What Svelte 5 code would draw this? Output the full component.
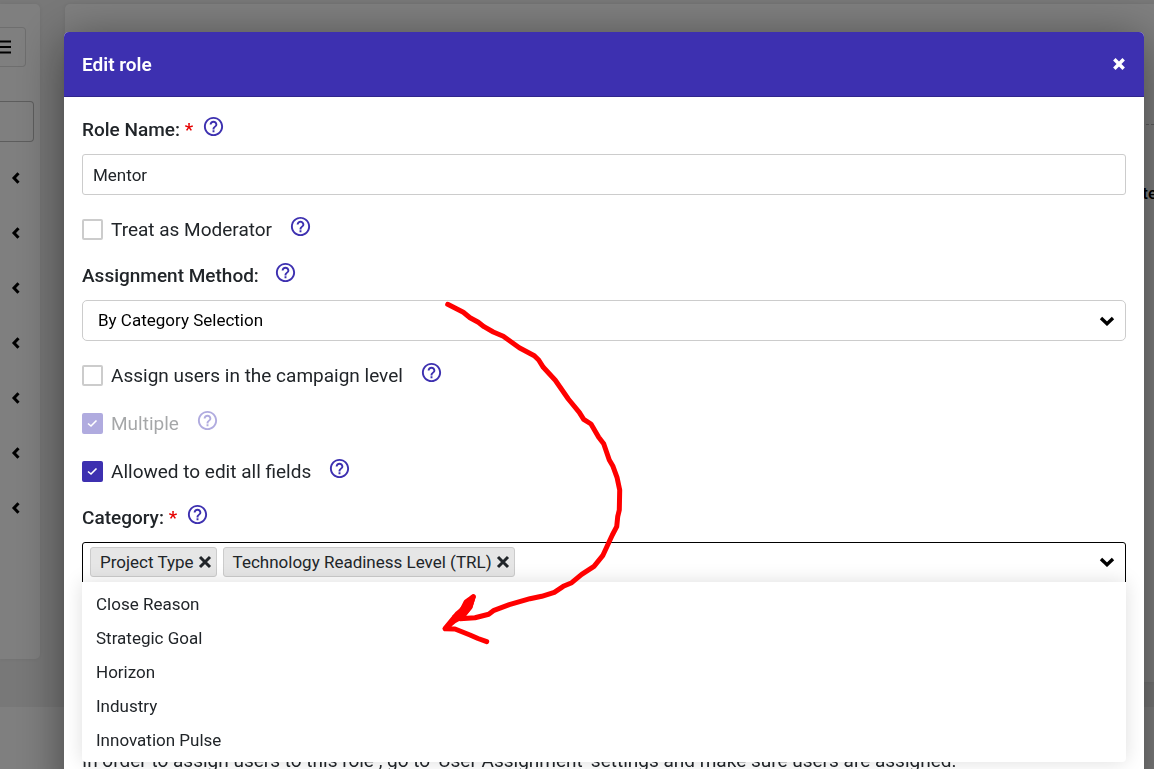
<script lang="ts">
  let roleName = $state('Mentor');
  let method = $state('By Category Selection');
  let moderator = $state(false);
  let campaign = $state(false);
  let multiple = $state(true);
  let editAll = $state(true);
  let selected = $state(['Project Type', 'Technology Readiness Level (TRL)']);
  const options = ['Close Reason', 'Strategic Goal', 'Horizon', 'Industry', 'Innovation Pulse'];
  const sections = [1, 2, 3, 4, 5, 6, 7];

  function remove(name: string) {
    selected = selected.filter((item) => item !== name);
  }
</script>

{#snippet help(topic)}
  <button class="help" type="button" aria-label={'Help: ' + topic}>
    <svg viewBox="0 0 24 24" aria-hidden="true">
      <path d="M11 18h2v-2h-2v2zm1-16C6.480 2 2 6.480 2 12s4.480 10 10 10 10-4.480 10-10S17.520 2 12 2zm0 18c-4.410 0-8-3.590-8-8s3.590-8 8-8 8 3.590 8 8-3.590 8-8 8zm0-14c-2.210 0-4 1.790-4 4h2c0-1.100.9-2 2-2s2 .9 2 2c0 2-3 1.750-3 5h2c0-2.250 3-2.500 3-5 0-2.210-1.790-4-4-4z" />
    </svg>
  </button>
{/snippet}

{#snippet tick()}
  <svg class="tick" viewBox="0 0 21 21" aria-hidden="true"><path d="M6 10.500l3 2.500 5.500-5.500" /></svg>
{/snippet}

{#snippet chevron()}
  <svg class="chevron" viewBox="0 0 16 10" aria-hidden="true"><path d="M2 2 8 7.700 14 2" /></svg>
{/snippet}

<div class="page">
  <div class="columns">
    <aside class="sidebar">
      <button class="menu-button" type="button" aria-label="Menu">
        <svg viewBox="0 0 12 14" aria-hidden="true"><path d="M0 1.500h11M0 7h11M0 12.500h11" /></svg>
      </button>
      <input class="search" type="text" aria-label="Search" />
      <nav class="sections">
        {#each sections as section}
          <button class="section" type="button" aria-label={'Section ' + section}>
            <svg viewBox="0 0 10 14" aria-hidden="true"><path d="M7.500 2.200 3 7l4.500 4.800" /></svg>
          </button>
        {/each}
      </nav>
    </aside>
    <main class="content">
      <div class="content-head"></div>
      <div class="content-row">te</div>
    </main>
  </div>
  <div class="page-foot"></div>
</div>

<div class="backdrop">
  <div class="modal" role="dialog" aria-labelledby="title">
    <header>
      <h1 id="title">Edit role</h1>
      <button class="close" type="button" aria-label="Close">
        <svg viewBox="0 0 12 12" aria-hidden="true"><path d="M2 2l8 8M10 2l-8 8" /></svg>
      </button>
    </header>

    <form>
      <div class="field">
        <div class="line title-line">
          <label for="role">Role Name: <span class="req">*</span></label>
          {@render help('Role Name')}
        </div>
        <input id="role" class="control" type="text" bind:value={roleName} />
      </div>

      <div class="line check-line">
        <span class="box"><input id="moderator" type="checkbox" bind:checked={moderator} />{@render tick()}</span>
        <label for="moderator">Treat as Moderator</label>
        {@render help('Treat as Moderator')}
      </div>

      <div class="field">
        <div class="line title-line wide">
          <label for="method">Assignment Method:</label>
          {@render help('Assignment Method')}
        </div>
        <div class="select-wrap">
          <select id="method" class="control" bind:value={method}>
            <option>By Category Selection</option>
          </select>
          {@render chevron()}
        </div>
      </div>

      <div class="checks">
        <div class="line check-line">
          <span class="box"><input id="campaign" type="checkbox" bind:checked={campaign} />{@render tick()}</span>
          <label for="campaign">Assign users in the campaign level</label>
          {@render help('Assign users')}
        </div>
        <div class="line check-line disabled">
          <span class="box"><input id="multiple" type="checkbox" bind:checked={multiple} disabled />{@render tick()}</span>
          <label for="multiple">Multiple</label>
          {@render help('Multiple')}
        </div>
        <div class="line check-line">
          <span class="box"><input id="editAll" type="checkbox" bind:checked={editAll} />{@render tick()}</span>
          <label for="editAll">Allowed to edit all fields</label>
          {@render help('Allowed to edit all fields')}
        </div>
      </div>

      <div class="field">
        <div class="line title-line">
          <label for="category">Category: <span class="req">*</span></label>
          {@render help('Category')}
        </div>
        <div class="multi">
          <div class="chips">
            {#each selected as name}
              <span class="chip">
                {name}
                <button type="button" aria-label={'Remove ' + name} onclick={() => remove(name)}>
                  <svg viewBox="0 0 14 14" aria-hidden="true"><path d="M2 2l10 10M12 2 2 12" /></svg>
                </button>
              </span>
            {/each}
            <input id="category" type="text" />
            {@render chevron()}
          </div>
          <ul class="options">
            {#each options as option}
              <li><button type="button">{option}</button></li>
            {/each}
          </ul>
        </div>
        <p class="note">In order to assign users to this role , go to 'User Assignment' settings and make sure users are assigned.</p>
      </div>
    </form>

    <svg class="arrow" viewBox="0 0 190 350" aria-hidden="true">
      <path d="M13.700 12.300 29.300 20.300 36 25.700 44.300 30.300 50 34.700 59.300 40 69.300 44.300 85.300 55.700 100.300 63.700 104.700 68 109.300 75.300 121.300 88.300 134.300 107 145.300 120.300 149.700 127.300 157 132 164.700 145.300 169.700 151.700 175.300 168 178.700 173.700 183 185.300 185.700 198 185.300 218 183.700 224.700 182.700 234.700 178.300 243 168.700 263.700 160 274.300 147.700 282.300 137.700 290.700 129.300 294.300 120.300 300.300 107.700 304.300 96 306.700 75.300 312.700 60 318.300 54.700 322.300 41 325.700 26 326.700 20.500 325" />
      <path d="M39.300 304.700 32 310 28 318 23 322 11 336.700 21 337 36 343 44 346.500 52.700 349.700M39.300 304.700 36 315 29 324 20 329 11 336.700" />
      <path d="M39 305 30 315 22 325 29 323 36 315z" fill="#f00" />
    </svg>
  </div>
</div>

<style>
  :global(body) {
    margin: 0;
    overflow: hidden;
    font-family: Roboto, sans-serif;
    color: #212529;
  }
  button {
    padding: 0;
    border: 0;
    background: none;
    color: inherit;
    font: inherit;
  }
  svg {
    display: block;
    fill: none;
  }

  .page {
    display: flex;
    flex-direction: column;
    height: 100vh;
    overflow: hidden;
    background: #f0f0f0;
  }
  .columns {
    display: grid;
    grid-template-columns: 40px 1fr;
    gap: 25px;
    flex: 1;
    padding: 4px 0 0;
    align-items: start;
  }
  .sidebar {
    height: 655px;
    overflow: hidden;
    background: #fff;
    border-radius: 0 5px 5px 0;
    box-shadow: 0 0 4px #0001;
  }
  .menu-button {
    display: flex;
    align-items: center;
    box-sizing: border-box;
    width: 26px;
    height: 40px;
    margin-top: 23px;
    border: 1px solid #ddd;
    border-left: 0;
    border-radius: 0 4px 4px 0;
  }
  .menu-button svg {
    width: 12px;
    height: 14px;
    stroke: #000;
    stroke-width: 2;
  }
  .search {
    display: block;
    box-sizing: border-box;
    width: 34px;
    height: 41px;
    margin-top: 34px;
    border: 1px solid #bbb;
    border-left: 0;
    border-radius: 0 4px 4px 0;
  }
  .sections {
    display: grid;
    grid-auto-rows: 55px;
    margin-top: 8px;
  }
  .section {
    display: flex;
    align-items: center;
    padding-left: 11px;
  }
  .section svg {
    width: 10px;
    height: 14px;
    stroke: #000;
    stroke-width: 3;
  }
  .content {
    height: 678px;
    overflow: hidden;
    background: #fff;
    border-radius: 5px 0 0;
    box-shadow: 0 0 4px #0001;
  }
  .content-head {
    height: 120px;
    border-bottom: 1px dashed #bbb;
  }
  .content-row {
    margin: 58px -3px 0 0;
    text-align: right;
    font-size: 17px;
    font-weight: 500;
    line-height: 20px;
    color: #000;
  }
  .page-foot {
    height: 62px;
    background: #fff;
  }

  .backdrop {
    position: fixed;
    inset: 0;
    padding: 32px 10px 0 64px;
    background: #00000080;
  }
  .modal {
    position: relative;
    min-height: 100vh;
    background: #fff;
    border-radius: 5px;
    box-shadow: 0 8px 48px #0007;
  }
  header {
    display: flex;
    align-items: center;
    justify-content: space-between;
    box-sizing: border-box;
    height: 65px;
    padding: 0 18px;
    background: #3d30b0;
    border-bottom: 1px solid #30268c;
    border-radius: 5px 5px 0 0;
    color: #fff;
  }
  h1 {
    margin: 0;
    font-size: 19px;
    font-weight: 600;
    line-height: 25px;
  }
  .close svg {
    width: 14px;
    height: 14px;
    stroke: #fff;
    stroke-width: 3;
  }
  form {
    padding: 21px 18px;
  }
  .line {
    display: flex;
    align-items: center;
    height: 24px;
    font-size: 19px;
    line-height: 24px;
  }
  .title-line {
    gap: 9px;
    margin-bottom: 12px;
    font-weight: 500;
  }
  .title-line.wide {
    gap: 15px;
  }
  .req {
    color: #e60000;
  }
  .help {
    align-self: flex-start;
    margin-top: -3px;
    color: #3d30b0;
  }
  .help svg {
    width: 23px;
    height: 23px;
    fill: currentColor;
  }
  .check-line {
    margin: 23px 0 22px;
  }
  .check-line label {
    padding: 0 17px 0 8px;
  }
  .checks {
    display: grid;
    gap: 24px;
    margin: 23px 0 22px;
  }
  .checks .check-line {
    margin: 0;
  }
  .box {
    display: grid;
    padding-bottom: 1px;
  }
  .box > input,
  .box > :global(svg) {
    grid-area: 1 / 1;
    box-sizing: border-box;
    width: 21px;
    height: 21px;
  }
  .box > input {
    margin: 0;
    appearance: none;
    background: #fff;
    border: 2px solid #ccc;
    border-radius: 2px;
  }
  .box > input:checked {
    background: #3d30b0;
    border-color: #3d30b0;
  }
  .tick {
    pointer-events: none;
    stroke: #fff;
    stroke-width: 1.6;
  }
  .disabled {
    opacity: 0.4;
  }
  .control {
    display: block;
    box-sizing: border-box;
    width: 100%;
    height: 41px;
    padding: 0 10px;
    background: #fff;
    border: 1px solid #ccc;
    border-radius: 3px;
    color: #212529;
    font: 17px Roboto, sans-serif;
  }
  .select-wrap {
    display: grid;
    align-items: center;
  }
  .select-wrap > select {
    grid-area: 1 / 1;
    padding: 0 15px 2px;
    appearance: none;
    border-radius: 5px;
    color: #000;
  }
  .select-wrap > :global(.chevron) {
    grid-area: 1 / 1;
    justify-self: end;
    margin-right: 11px;
    pointer-events: none;
  }
  .chevron {
    flex: none;
    width: 16px;
    height: 10px;
    stroke: #000;
    stroke-width: 3.4;
  }
  .multi {
    position: relative;
  }
  .chips {
    display: flex;
    align-items: center;
    gap: 6px;
    box-sizing: border-box;
    height: 41px;
    padding: 0 10px 1px 7px;
    border: 1px solid #000;
    border-radius: 3px 3px 0 0;
  }
  .chips > input {
    flex: 1;
    min-width: 0;
    border: 0;
    outline: 0;
    background: none;
    font: 17px Roboto, sans-serif;
  }
  .chip {
    display: flex;
    align-items: center;
    gap: 4px;
    box-sizing: border-box;
    height: 30px;
    padding: 0 4px 1px 9px;
    background: #e6e6e6;
    border: 1px solid #ccc;
    border-radius: 3px;
    font-size: 17px;
    white-space: nowrap;
  }
  .chip svg {
    width: 14px;
    height: 14px;
    stroke: #212529;
    stroke-width: 3;
  }
  .options {
    position: absolute;
    inset: 40px 0 auto;
    display: grid;
    grid-auto-rows: 34px;
    margin: 0;
    padding: 5px 0;
    list-style: none;
    background: #fff;
    border-radius: 0 0 4px 4px;
    box-shadow: 0 0 20px #0002;
    font-size: 17px;
  }
  .options button {
    width: 100%;
    height: 34px;
    padding: 0 14px;
    text-align: left;
  }
  .note {
    margin: 166px 0 0;
    font-size: 19px;
    line-height: 24px;
  }
  .arrow {
    position: absolute;
    top: 260px;
    left: 370px;
    width: 190px;
    height: 350px;
    overflow: visible;
    pointer-events: none;
    stroke: #f00;
    stroke-width: 5;
    stroke-linecap: round;
    stroke-linejoin: round;
  }
</style>
